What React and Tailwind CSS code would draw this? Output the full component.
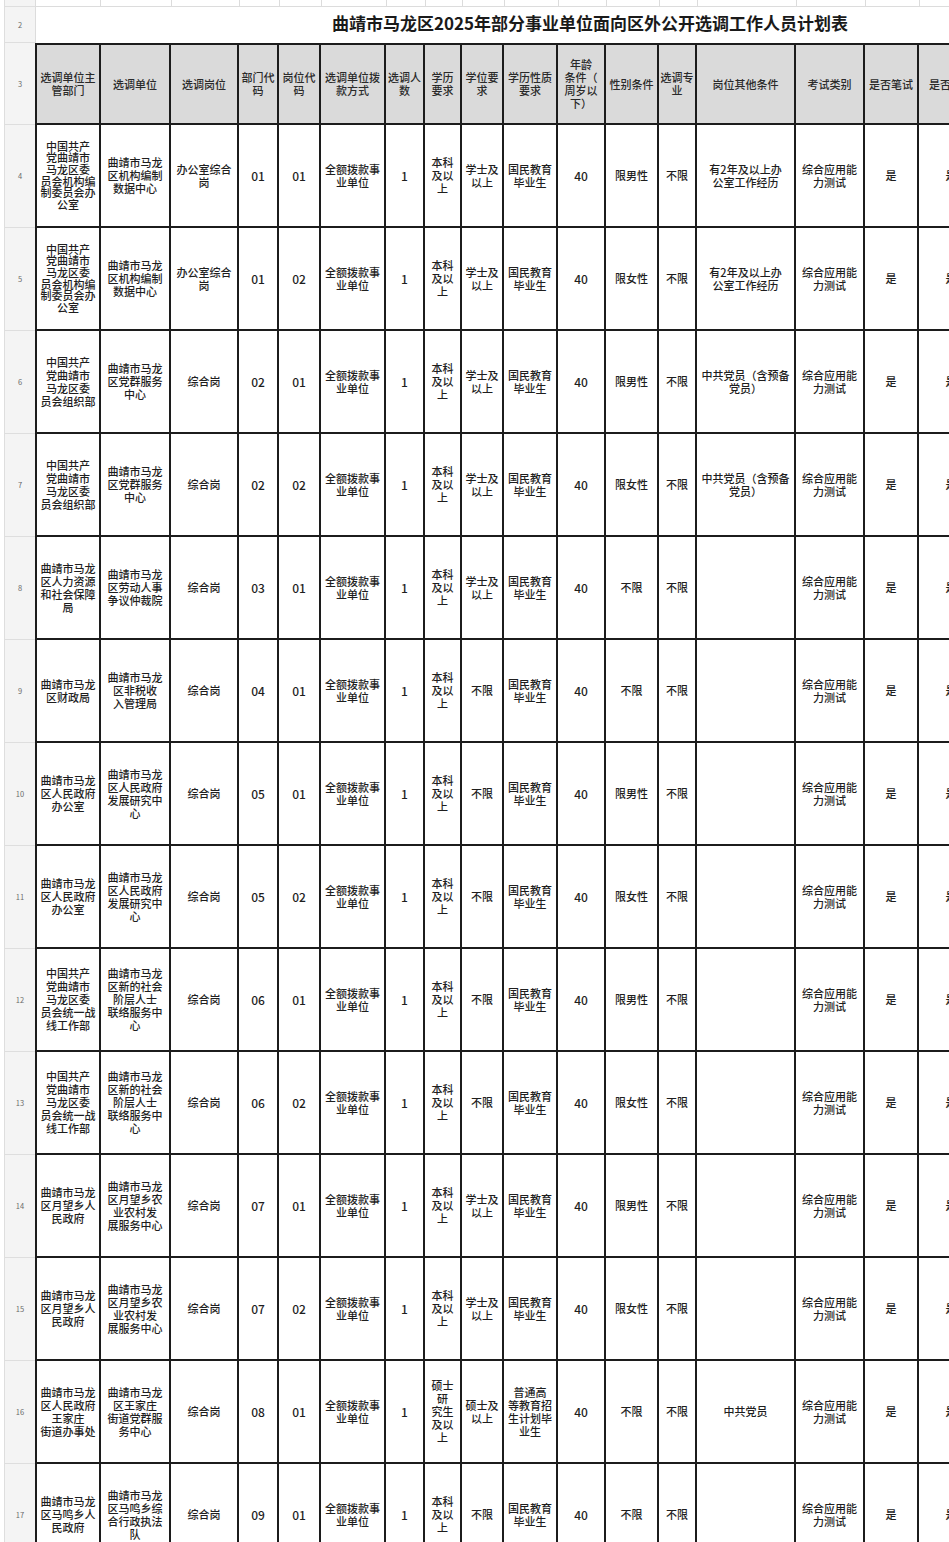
import React from "react";

const W = [
  "w-[66px] border-l-2",
  "w-[70px]",
  "w-[68px]",
  "w-[40px]",
  "w-[42px]",
  "w-[65px]",
  "w-[39px]",
  "w-[37px]",
  "w-[42px]",
  "w-[54px]",
  "w-[48px]",
  "w-[53px]",
  "w-[38px]",
  "w-[99px]",
  "w-[69px]",
  "w-[54px]",
  "w-[66px]",
];

const TOPW = [
  "w-[65px]",
  "w-[71px]",
  "w-[68px]",
  "w-[40px]",
  "w-[42px]",
  "w-[65px]",
  "w-[39px]",
  "w-[37px]",
  "w-[42px]",
  "w-[54px]",
  "w-[48px]",
  "w-[53px]",
  "w-[38px]",
  "w-[99px]",
  "w-[69px]",
  "w-[54px]",
  "w-[60px]",
];

const HEAD = [
  "选调单位主\n管部门",
  "选调单位",
  "选调岗位",
  "部门代\n码",
  "岗位代\n码",
  "选调单位拨\n款方式",
  "选调人\n数",
  "学历\n要求",
  "学位要\n求",
  "学历性质\n要求",
  "年龄\n条件（\n周岁以\n下）",
  "性别条件",
  "选调专\n业",
  "岗位其他条件",
  "考试类别",
  "是否笔试",
  "是否面试",
];

const FUND = "全额拨款事\n业单位";
const BK = "本科\n及以\n上";
const XS = "学士及\n以上";
const GM = "国民教育\n毕业生";
const ZH = "综合应用能\n力测试";

const ROWS = [
  {
    n: 4,
    c: ["中国共产\n党曲靖市\n马龙区委\n员会机构编\n制委员会办\n公室", "曲靖市马龙\n区机构编制\n数据中心", "办公室综合\n岗", "01", "01", FUND, "1", BK, XS, GM, "40", "限男性", "不限", "有2年及以上办\n公室工作经历", ZH, "是", "是"],
    tight: true,
  },
  {
    n: 5,
    c: ["中国共产\n党曲靖市\n马龙区委\n员会机构编\n制委员会办\n公室", "曲靖市马龙\n区机构编制\n数据中心", "办公室综合\n岗", "01", "02", FUND, "1", BK, XS, GM, "40", "限女性", "不限", "有2年及以上办\n公室工作经历", ZH, "是", "是"],
    tight: true,
  },
  {
    n: 6,
    c: ["中国共产\n党曲靖市\n马龙区委\n员会组织部", "曲靖市马龙\n区党群服务\n中心", "综合岗", "02", "01", FUND, "1", BK, XS, GM, "40", "限男性", "不限", "中共党员（含预备\n党员）", ZH, "是", "是"],
  },
  {
    n: 7,
    c: ["中国共产\n党曲靖市\n马龙区委\n员会组织部", "曲靖市马龙\n区党群服务\n中心", "综合岗", "02", "02", FUND, "1", BK, XS, GM, "40", "限女性", "不限", "中共党员（含预备\n党员）", ZH, "是", "是"],
  },
  {
    n: 8,
    c: ["曲靖市马龙\n区人力资源\n和社会保障\n局", "曲靖市马龙\n区劳动人事\n争议仲裁院", "综合岗", "03", "01", FUND, "1", BK, XS, GM, "40", "不限", "不限", "", ZH, "是", "是"],
  },
  {
    n: 9,
    c: ["曲靖市马龙\n区财政局", "曲靖市马龙\n区非税收\n入管理局", "综合岗", "04", "01", FUND, "1", BK, "不限", GM, "40", "不限", "不限", "", ZH, "是", "是"],
  },
  {
    n: 10,
    c: ["曲靖市马龙\n区人民政府\n办公室", "曲靖市马龙\n区人民政府\n发展研究中\n心", "综合岗", "05", "01", FUND, "1", BK, "不限", GM, "40", "限男性", "不限", "", ZH, "是", "是"],
  },
  {
    n: 11,
    c: ["曲靖市马龙\n区人民政府\n办公室", "曲靖市马龙\n区人民政府\n发展研究中\n心", "综合岗", "05", "02", FUND, "1", BK, "不限", GM, "40", "限女性", "不限", "", ZH, "是", "是"],
  },
  {
    n: 12,
    c: ["中国共产\n党曲靖市\n马龙区委\n员会统一战\n线工作部", "曲靖市马龙\n区新的社会\n阶层人士\n联络服务中\n心", "综合岗", "06", "01", FUND, "1", BK, "不限", GM, "40", "限男性", "不限", "", ZH, "是", "是"],
  },
  {
    n: 13,
    c: ["中国共产\n党曲靖市\n马龙区委\n员会统一战\n线工作部", "曲靖市马龙\n区新的社会\n阶层人士\n联络服务中\n心", "综合岗", "06", "02", FUND, "1", BK, "不限", GM, "40", "限女性", "不限", "", ZH, "是", "是"],
  },
  {
    n: 14,
    c: ["曲靖市马龙\n区月望乡人\n民政府", "曲靖市马龙\n区月望乡农\n业农村发\n展服务中心", "综合岗", "07", "01", FUND, "1", BK, XS, GM, "40", "限男性", "不限", "", ZH, "是", "是"],
  },
  {
    n: 15,
    c: ["曲靖市马龙\n区月望乡人\n民政府", "曲靖市马龙\n区月望乡农\n业农村发\n展服务中心", "综合岗", "07", "02", FUND, "1", BK, XS, GM, "40", "限女性", "不限", "", ZH, "是", "是"],
  },
  {
    n: 16,
    c: ["曲靖市马龙\n区人民政府\n王家庄\n街道办事处", "曲靖市马龙\n区王家庄\n街道党群服\n务中心", "综合岗", "08", "01", FUND, "1", "硕士\n研\n究生\n及以\n上", "硕士及\n以上", "普通高\n等教育招\n生计划毕\n业生", "40", "不限", "不限", "中共党员", ZH, "是", "是"],
  },
  {
    n: 17,
    c: ["曲靖市马龙\n区马鸣乡人\n民政府", "曲靖市马龙\n区马鸣乡综\n合行政执法\n队", "综合岗", "09", "01", FUND, "1", BK, "不限", GM, "40", "不限", "不限", "", ZH, "是", "是"],
  },
];

const NUMCOLS = new Set([3, 4, 6, 10]);

function RowHead({ n, h }) {
  return (
    <>
      <div className={`w-[5px] shrink-0 ${h} border-r border-[#dedede] bg-white`} />
      <div
        className={`w-[30px] shrink-0 ${h} bg-[#f4f4f4] border-b border-[#dedede] flex items-center justify-center text-[7.5px] text-[#6b6b6b]`}
      >
        {n}
      </div>
    </>
  );
}

export default function App() {
  return (
    <div
      className="w-[949px] h-[1542px] overflow-hidden bg-white"
      style={{ fontFamily: '"Noto Sans CJK SC", "Noto Sans", sans-serif' }}
    >
      {/* partial row 1 */}
      <div className="flex h-[7px]">
        <RowHead n="" h="h-[7px]" />
        {TOPW.map((w, i) => (
          <div
            key={i}
            className={`${w} shrink-0 h-[7px] border-l border-b border-[#dcdcdc] bg-white`}
          />
        ))}
      </div>

      {/* title row 2 */}
      <div className="flex h-[36px]">
        <RowHead n="2" h="h-[36px]" />
        <div className="w-[914px] shrink-0 h-[36px] border-l border-[#dcdcdc] bg-white flex items-center pl-[296px] pb-[6px]">
          <span className="whitespace-nowrap text-[17px] font-bold text-[#1a1a1a] leading-none">
            曲靖市马龙区2025年部分事业单位面向区外公开选调工作人员计划表
          </span>
        </div>
      </div>

      {/* header row 3 */}
      <div className="flex h-[82px]">
        <RowHead n="3" h="h-[82px]" />
        {HEAD.map((t, i) => (
          <div
            key={i}
            className={`${W[i]} shrink-0 h-[82px] border-t-2 border-r-2 border-b-2 border-[#1c1c1c] bg-[#dadada] flex items-center justify-center text-center whitespace-pre-line text-[11px] leading-[13px] font-medium text-[#2a2a2a] overflow-hidden`}
          >
            {t}
          </div>
        ))}
      </div>

      {ROWS.map((r) => (
        <div key={r.n} className="flex h-[103px]">
          <RowHead n={r.n} h="h-[103px]" />
          {r.c.map((t, i) => (
            <div
              key={i}
              className={`${W[i]} shrink-0 h-[103px] border-r-2 border-b-2 border-[#1c1c1c] bg-white flex items-center justify-center text-center whitespace-pre-line font-medium text-[#1e1e1e] overflow-hidden ${
                NUMCOLS.has(i)
                  ? "text-[12px] leading-[14px]"
                  : r.tight && i === 0
                  ? "text-[11px] leading-[11.6px]"
                  : "text-[11px] leading-[13px]"
              }`}
            >
              {t}
            </div>
          ))}
        </div>
      ))}
    </div>
  );
}
